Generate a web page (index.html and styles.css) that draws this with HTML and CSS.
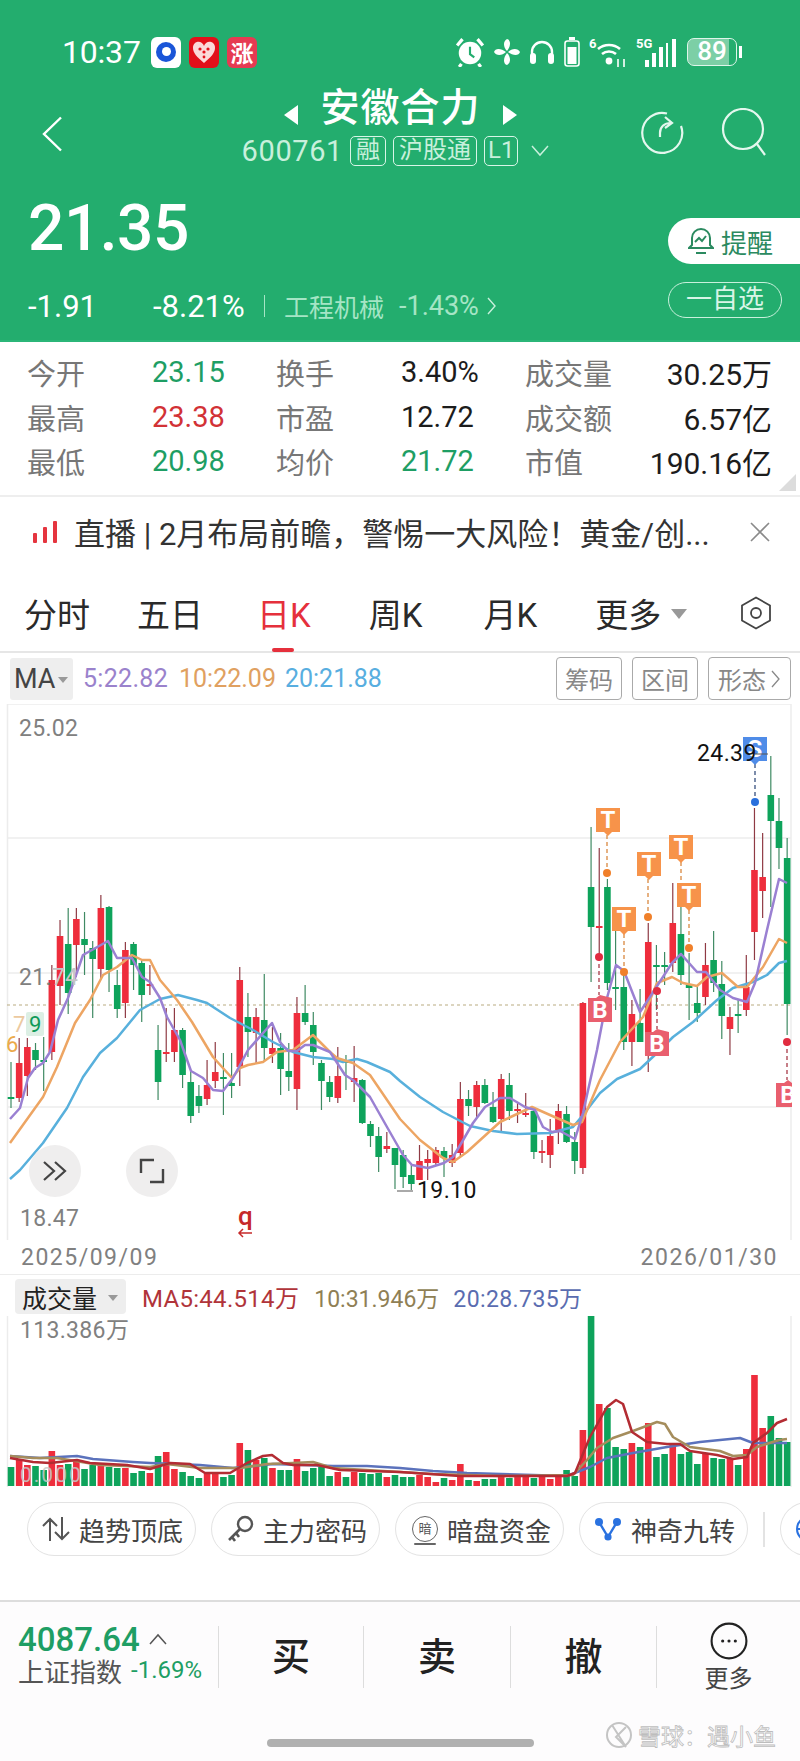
FILE: index.html
```html
<!DOCTYPE html>
<html lang="zh-CN">
<head>
  <meta charset="UTF-8">
  <title>安徽合力</title>
  <link rel="stylesheet" href="styles.css">
</head>
<body>
  <div id="page">
    <header id="top">
      <div class="status-bar">
        <div class="status-left">
          <span class="clock">10:37</span>
          <span class="app-icon app-blue"><svg width="22" height="22" viewBox="0 0 22 22"><circle cx="11" cy="11" r="10" fill="#1a55d8"/><circle cx="11.5" cy="10.5" r="4.5" fill="#fff"/></svg></span>
          <span class="app-icon app-red"><svg width="26" height="24" viewBox="0 0 26 24"><path d="M13 23C6 17 2 13 2 8a5.6 5.6 0 0 1 11-2 5.6 5.6 0 0 1 11 2c0 5-4 9-11 15z" fill="#fbd9d9"/><circle cx="9" cy="9" r="1.6" fill="#e2101a"/><circle cx="13" cy="12" r="1.6" fill="#e2101a"/><circle cx="17" cy="9" r="1.6" fill="#e2101a"/><circle cx="13" cy="17" r="1.4" fill="#e2101a"/></svg></span>
          <span class="app-icon app-pink">涨</span>
        </div>
        <div class="status-right">
          <svg width="30" height="30" viewBox="0 0 28 28"><circle cx="14" cy="15" r="10.5" fill="#fff"/><path d="M14 9v7l4 3" stroke="#23ad6e" stroke-width="2" fill="none"/><path d="M2 8l5-6M26 8l-5-6M6 25l-2 3M22 25l2 3" stroke="#fff" stroke-width="3"/></svg>
          <svg width="26" height="28" viewBox="0 0 26 28"><g fill="#fff"><path d="M13 13C9 9 9 3 13 1c4 1 4 7 0 12z"/><path d="M13 13C9 9 9 3 13 1c4 1 4 7 0 12z" transform="rotate(90 13 14)"/><path d="M13 13C9 9 9 3 13 1c4 1 4 7 0 12z" transform="rotate(180 13 14)"/><path d="M13 13C9 9 9 3 13 1c4 1 4 7 0 12z" transform="rotate(270 13 14)"/></g></svg>
          <svg width="26" height="28" viewBox="0 0 26 28"><path d="M3 23V14a10 10 0 0 1 20 0v9" stroke="#fff" stroke-width="2.4" fill="none"/><rect x="1" y="15" width="6" height="11" rx="3" fill="#fff"/><rect x="19" y="15" width="6" height="11" rx="3" fill="#fff"/></svg>
          <svg width="16" height="30" viewBox="0 0 16 30"><rect x="1" y="4" width="14" height="25" rx="2.5" stroke="#fff" stroke-width="1.6" fill="none"/><rect x="5" y="0" width="6" height="3" fill="#fff"/><rect x="3.5" y="10" width="9" height="17" fill="#fff"/></svg>
          <svg width="38" height="32" viewBox="0 0 38 32"><text x="0" y="12" class="status-mini">6</text><path d="M9 13a17 17 0 0 1 22 0M13 18a11 11 0 0 1 14 0" stroke="#fff" stroke-width="2.6" fill="none"/><circle cx="20" cy="25" r="3.4" fill="#fff"/><path d="M29 23v8M35 23v8" stroke="#fff" stroke-width="1.6"/></svg>
          <svg width="42" height="32" viewBox="0 0 42 32"><text x="0" y="12" class="status-mini">5G</text><g fill="#fff"><rect x="9" y="24" width="4" height="7"/><rect x="16" y="17" width="4" height="14"/><rect x="23" y="11" width="4" height="20"/><rect x="30" y="7" width="2" height="24"/><rect x="36" y="3" width="4" height="28"/></g></svg>
          <span class="battery"><span class="battery-level">89</span><i class="battery-tip"></i></span>
        </div>
      </div>

      <div class="nav-row">
        <svg class="back-icon" width="22" height="36" viewBox="0 0 22 36"><path d="M20 1.5L3 18l17 16.5" stroke="#fff" stroke-width="2.4" fill="none"/></svg>
        <div class="title-box">
          <div class="title-line">
            <i class="arrow-left"></i>
            <span class="stock-name">安徽合力</span>
            <i class="arrow-right"></i>
          </div>
          <div class="sub-line">
            <span class="stock-code">600761</span>
            <span class="tag">融</span>
            <span class="tag">沪股通</span>
            <span class="tag tag-num">L1</span>
            <svg width="18" height="12" viewBox="0 0 18 12"><path d="M1 1l8 9 8-9" stroke="#c8f0dc" stroke-width="1.5" fill="none"/></svg>
          </div>
        </div>
        <div class="nav-actions">
          <svg width="44" height="44" viewBox="0 0 44 44"><path d="M27 3.5A20 20 0 1 0 41 16" stroke="#e4f7ee" stroke-width="2.2" fill="none"/><path d="M20 27v-4c0-6 4-10 11-10M25 7l7 6-7 5" stroke="#e4f7ee" stroke-width="2.2" fill="none"/></svg>
          <svg width="48" height="48" viewBox="0 0 48 48"><circle cx="23" cy="21" r="20" stroke="#e4f7ee" stroke-width="2.2" fill="none"/><path d="M37 36l8 11" stroke="#e4f7ee" stroke-width="2.2"/></svg>
        </div>
      </div>

      <div class="price-row">
        <div class="price-left">
          <div class="last-price">21.35</div>
          <div class="change-line">
            <span class="chg-abs">-1.91</span>
            <span class="chg-pct">-8.21%</span>
            <i class="chg-sep"></i>
            <span class="sector">工程机械</span>
            <span class="sector-pct">-1.43%</span>
            <svg width="10" height="20" viewBox="0 0 10 20"><path d="M1 2l7 8-7 8" stroke="#c8f0dc" stroke-width="1.4" fill="none"/></svg>
          </div>
        </div>
        <div class="price-right">
          <div class="remind-btn">
            <svg width="26" height="28" viewBox="0 0 26 28"><path d="M13 2a9 9 0 0 1 9 9v7l3 3H1l3-3v-7a9 9 0 0 1 9-9z" stroke="#2b8a60" stroke-width="2" fill="none"/><path d="M8 26h10M7 15l4-4 3 3 4-5" stroke="#2b8a60" stroke-width="2" fill="none"/></svg>
            <span>提醒</span>
          </div>
          <div class="watch-btn">一自选</div>
        </div>
      </div>
    </header>

    <section class="stats">
      <div class="stat-row">
        <span class="stat-label">今开</span><span class="stat-val val-green">23.15</span>
        <span class="stat-label">换手</span><span class="stat-val">3.40%</span>
        <span class="stat-label">成交量</span><span class="stat-val val-end">30.25万</span>
      </div>
      <div class="stat-row">
        <span class="stat-label">最高</span><span class="stat-val val-red">23.38</span>
        <span class="stat-label">市盈</span><span class="stat-val">12.72</span>
        <span class="stat-label">成交额</span><span class="stat-val val-end">6.57亿</span>
      </div>
      <div class="stat-row">
        <span class="stat-label">最低</span><span class="stat-val val-green">20.98</span>
        <span class="stat-label">均价</span><span class="stat-val val-green">21.72</span>
        <span class="stat-label">市值</span><span class="stat-val val-end">190.16亿</span>
      </div>
      <i class="corner"></i>
    </section>

    <section class="news">
      <svg width="24" height="22" viewBox="0 0 24 22"><g fill="#e5353f"><rect x="0" y="12" width="4" height="10" rx="1"/><rect x="10" y="6" width="4" height="16" rx="1"/><rect x="20" y="0" width="4" height="22" rx="1"/></g></svg>
      <span class="news-text">直播 | 2月布局前瞻，警惕一大风险！黄金/创...</span>
      <svg width="20" height="20" viewBox="0 0 20 20"><path d="M1 1l18 18M19 1L1 19" stroke="#8a8a8a" stroke-width="1.6"/></svg>
    </section>

    <nav class="tabs">
      <span class="tab">分时</span>
      <span class="tab">五日</span>
      <span class="tab tab-on">日K</span>
      <span class="tab">周K</span>
      <span class="tab">月K</span>
      <span class="tab tab-more">更多<i class="tri"></i></span>
      <svg width="32" height="34" viewBox="0 0 32 34"><path d="M16 1.5l14 8v15l-14 8-14-8v-15z" stroke="#444" stroke-width="1.8" fill="none"/><circle cx="16" cy="17" r="5" stroke="#444" stroke-width="1.8" fill="none"/></svg>
    </nav>

    <div class="ma-row">
      <span class="ma-box">MA<i class="tri tri-small"></i></span>
      <span class="ma5">5:22.82</span>
      <span class="ma10">10:22.09</span>
      <span class="ma20">20:21.88</span>
      <div class="ma-btns">
        <span class="ma-btn">筹码</span>
        <span class="ma-btn">区间</span>
        <span class="ma-btn">形态<svg width="10" height="20" viewBox="0 0 10 20"><path d="M1 2l7 8-7 8" stroke="#888" stroke-width="1.3" fill="none"/></svg></span>
      </div>
    </div>

    <section class="chart-panel">
      <svg id="kline" width="800" height="536" viewBox="0 704 800 536"></svg>
      <button class="round-btn btn-expand"><svg width="26" height="22" viewBox="0 0 26 22"><path d="M2 2l10 9-10 9M13 2l10 9-10 9" stroke="#444" stroke-width="2.2" fill="none"/></svg></button>
      <button class="round-btn btn-full"><svg width="26" height="26" viewBox="0 0 26 26"><path d="M15 2H2v13M11 24h13V11" stroke="#444" stroke-width="2.4" fill="none"/></svg></button>
    </section>

    <div class="date-row">
      <span>2025/09/09</span>
      <span>2026/01/30</span>
    </div>

    <div class="vol-head">
      <span class="vol-box">成交量<i class="tri tri-small"></i></span>
      <span class="vol5">MA5:44.514万</span>
      <span class="vol10">10:31.946万</span>
      <span class="vol20">20:28.735万</span>
    </div>
    <section class="vol-panel">
      <svg id="volume" width="800" height="171" viewBox="0 1316 800 171"></svg>
    </section>

    <div class="chips">
      <span class="chip"><svg width="28" height="26" viewBox="0 0 28 26"><path d="M8 25V3M1 10l7-7 7 7M20 1v22M13 16l7 7 7-7" stroke="#555" stroke-width="2" fill="none"/></svg>趋势顶底</span>
      <span class="chip"><svg width="28" height="28" viewBox="0 0 28 28"><circle cx="19" cy="9" r="7" stroke="#555" stroke-width="2.4" fill="none"/><path d="M14 14L3 25M6 22l3 4M10 18l3 4" stroke="#555" stroke-width="2.6" fill="none"/></svg>主力密码</span>
      <span class="chip"><span class="ball">暗</span>暗盘资金</span>
      <span class="chip"><svg width="28" height="24" viewBox="0 0 28 24"><path d="M5 5l9 15 9-15" stroke="#2a72e0" stroke-width="2.4" fill="none"/><circle cx="5" cy="5" r="4" fill="#2a72e0"/><circle cx="23" cy="5" r="4" fill="#2a72e0"/><circle cx="14" cy="20" r="3.6" fill="#2a72e0"/></svg>神奇九转</span>
      <i class="chip-sep"></i>
      <span class="chip chip-cut"><svg width="28" height="28" viewBox="0 0 28 28"><circle cx="14" cy="14" r="12" stroke="#2a72e0" stroke-width="2" fill="none"/><path d="M2 14h24" stroke="#2a72e0" stroke-width="2"/></svg></span>
    </div>

    <footer class="bottom">
      <div class="trade-bar">
        <div class="index-box">
          <div class="index-top"><span class="index-val">4087.64</span><svg width="18" height="12" viewBox="0 0 18 12"><path d="M1 11l8-9 8 9" stroke="#555" stroke-width="1.5" fill="none"/></svg></div>
          <div class="index-sub"><span class="index-name">上证指数</span><span class="index-pct">-1.69%</span></div>
        </div>
        <span class="trade-btn">买</span>
        <span class="trade-btn">卖</span>
        <span class="trade-btn">撤</span>
        <div class="more-btn">
          <svg width="38" height="38" viewBox="0 0 36 36"><circle cx="18" cy="18" r="16.5" stroke="#222" stroke-width="2" fill="none"/><g fill="#222"><circle cx="12" cy="18" r="1.5"/><circle cx="18" cy="18" r="1.5"/><circle cx="24" cy="18" r="1.5"/></g></svg>
          <span>更多</span>
        </div>
      </div>
      <div class="home-line">
        <i class="home-bar"></i>
        <div class="watermark">
          <svg width="28" height="38" viewBox="0 0 28 38"><circle cx="14" cy="19" r="12" stroke="#c4c4c4" stroke-width="2" fill="none"/><path d="M7 9l14 22M21 11L11 21l10 10" stroke="#c4c4c4" stroke-width="2" fill="none"/></svg>
          <span>雪球：遇小鱼</span>
        </div>
      </div>
    </footer>
  </div>
  <script src="chart.js"></script>
</body>
</html>
```

FILE: styles.css
```css
html, body {
  margin: 0;
  padding: 0;
  background-color: #fff;
  font-family: Roboto, "Noto Sans CJK SC", sans-serif;
  color: #222;
}

#page {
  width: 800px;
  height: 1761px;
  overflow: hidden;
  display: flex;
  flex-direction: column;
}

i {
  display: block;
  font-style: normal;
}

/* header */
#top {
  height: 342px;
  box-sizing: border-box;
  background-color: #23ad6e;
  border-bottom: 2px solid #2bb678;
  color: #fff;
  flex: none;
}

.status-bar {
  height: 44px;
  margin-top: 30px;
  padding: 0 58px 0 62px;
  display: flex;
  justify-content: space-between;
  align-items: center;
}

.status-left {
  display: flex;
  align-items: center;
  gap: 8px;
}

.clock {
  font-size: 32px;
  width: 81px;
  letter-spacing: -0.2px;
  white-space: nowrap;
}

.app-icon {
  width: 30px;
  height: 31px;
  border-radius: 6px;
  display: flex;
  align-items: center;
  justify-content: center;
  font-size: 23px;
  font-weight: 700;
}

.app-blue { background-color: #fff; }
.app-red { background-color: #e2101a; }
.app-pink { background-color: #e63a52; }

.status-right {
  display: flex;
  align-items: center;
  gap: 9px;
}

.status-mini {
  font: 700 13px Roboto, sans-serif;
  fill: #fff;
}

.battery {
  display: flex;
  align-items: center;
  gap: 2px;
}

.battery-level {
  width: 50px;
  height: 28px;
  box-sizing: border-box;
  border: 1.5px solid #dff5ea;
  border-radius: 7px;
  font-size: 26px;
  font-weight: 500;
  line-height: 25px;
  text-align: center;
  background: linear-gradient(90deg, #7ccfa6 85%, transparent 85%);
}

.battery-tip {
  width: 3px;
  height: 12px;
  background-color: #fff;
}

.nav-row {
  height: 92px;
  margin-top: 6px;
  padding: 0 32px 0 41px;
  display: grid;
  grid-template-columns: 1fr auto 1fr;
  align-items: center;
}

.back-icon {
  margin-top: 16px;
}

.title-box {
  display: flex;
  flex-direction: column;
  align-items: center;
  padding: 0 8px 2px 0;
}

.title-line {
  display: flex;
  align-items: center;
  gap: 22px;
  height: 52px;
}

.stock-name {
  font-size: 39px;
  font-weight: 500;
  letter-spacing: 1px;
  line-height: 52px;
}

.arrow-left,
.arrow-right {
  width: 0;
  height: 0;
  margin-top: 14px;
  border-top: 10px solid transparent;
  border-bottom: 10px solid transparent;
}

.arrow-left { border-right: 14px solid #fff; }
.arrow-right { border-left: 14px solid #fff; }

.sub-line {
  display: flex;
  align-items: center;
  gap: 7px;
  padding-right: 10px;
  color: #c8f0dc;
}

.stock-code {
  font-size: 29px;
  letter-spacing: 0.6px;
}

.tag {
  height: 30px;
  box-sizing: border-box;
  padding: 0 5px;
  border: 1px solid #d8f5e7;
  border-radius: 5px;
  font-size: 24px;
  line-height: 26px;
}

.tag-num {
  padding: 0 3px;
  margin-right: 6px;
}

.nav-actions {
  display: flex;
  justify-content: flex-end;
  align-items: center;
  gap: 36px;
  padding-top: 12px;
}

.price-row {
  display: flex;
  justify-content: space-between;
  padding-top: 19px;
}

.price-left {
  padding-left: 28px;
}

.last-price {
  font-size: 64px;
  font-weight: 500;
  line-height: 75px;
  letter-spacing: -0.5px;
}

.change-line {
  display: flex;
  align-items: center;
  margin-top: 22px;
  height: 36px;
  font-size: 31px;
  color: #fff;
}

.chg-abs { width: 125px; }

.chg-pct { width: 111px; white-space: nowrap; }

.chg-sep {
  width: 1px;
  height: 22px;
  background-color: #a5e5c5;
  margin-right: 19px;
}

.sector {
  font-size: 25px;
  color: #a5e5c5;
  margin-right: 15px;
}

.sector-pct {
  font-size: 27px;
  color: #a5e5c5;
  margin-right: 8px;
}

.price-right {
  width: 132px;
  padding-top: 27px;
}

.remind-btn {
  height: 46px;
  display: flex;
  align-items: center;
  gap: 7px;
  padding-left: 20px;
  background-color: #fff;
  border-radius: 23px 0 0 23px;
  color: #2b8a60;
  font-size: 26px;
}

.watch-btn {
  width: 114px;
  height: 36px;
  margin-top: 18px;
  box-sizing: border-box;
  border: 1px solid #c8f0dc;
  border-radius: 18px;
  color: #d8f5e7;
  font-size: 26px;
  line-height: 32px;
  text-align: center;
}

/* quote table */
.stats {
  position: relative;
  height: 155px;
  box-sizing: border-box;
  padding-top: 8px;
  border-bottom: 2px solid #eee;
  flex: none;
}

.stat-row {
  height: 44.5px;
  padding: 0 28px 0 27px;
  display: grid;
  grid-template-columns: 125px 124px 125px 124px 1fr 0;
  align-items: center;
}

.stat-row .val-end {
  grid-column: 6;
  justify-self: end;
  white-space: nowrap;
}

.stat-label {
  font-size: 29px;
  color: #777;
}

.stat-val {
  font-size: 29px;
  color: #1c1c1c;
}

.val-end { font-size: 30px; }
.val-green { color: #1e9e64; }
.val-red { color: #d23236; }

.corner {
  position: absolute;
  right: 4px;
  bottom: 4px;
  width: 0;
  height: 0;
  border-left: 17px solid transparent;
  border-bottom: 17px solid #dcdcdc;
}

/* news strip */
.news {
  height: 74px;
  box-sizing: border-box;
  padding: 0 30px 5px 33px;
  display: flex;
  align-items: center;
  flex: none;
}

.news-text {
  flex: 1;
  margin-left: 17px;
  font-size: 31px;
  color: #333;
  white-space: nowrap;
  overflow: hidden;
}

/* tabs */
.tabs {
  position: relative;
  height: 82px;
  box-sizing: border-box;
  padding: 3px 27px 0 24px;
  display: flex;
  align-items: center;
  border-bottom: 2px solid #e6e6e6;
  flex: none;
}

.tab {
  font-size: 33px;
  color: #2a2a2a;
  white-space: nowrap;
}

.tab:nth-child(1) { margin-right: 47px; }
.tab:nth-child(2) { margin-right: 54px; }
.tab:nth-child(3) { margin-right: 58px; }
.tab:nth-child(4) { margin-right: 61px; }
.tab:nth-child(5) { margin-right: 58px; }

.tab-on {
  color: #e5303c;
}

.tab-on::after {
  content: "";
  position: absolute;
  left: 272px;
  bottom: -1px;
  width: 22px;
  height: 4px;
  border-radius: 2px;
  background-color: #e5303c;
}

.tab-more {
  display: flex;
  align-items: center;
  margin-right: 53px;
}

.tri {
  width: 0;
  height: 0;
  margin-left: 10px;
  margin-top: 2px;
  border-left: 8px solid transparent;
  border-right: 8px solid transparent;
  border-top: 10px solid #999;
}

.tri-small {
  margin-left: 3px;
  border-left-width: 5px;
  border-right-width: 5px;
  border-top-width: 6px;
}

.ma-row {
  height: 51px;
  box-sizing: border-box;
  padding: 3px 9px 3px 10px;
  display: flex;
  align-items: center;
  font-size: 25px;
  flex: none;
}

.ma-box {
  width: 63px;
  height: 42px;
  box-sizing: border-box;
  padding-left: 4px;
  display: flex;
  align-items: center;
  background-color: #eee;
  border-radius: 3px;
  font-size: 27px;
  color: #444;
  margin-right: 10px;
}

.ma5 { color: #9a82cc; margin-right: 11px; letter-spacing: 0.3px; }
.ma10 { color: #e0a060; margin-right: 9px; }
.ma20 { color: #58aee0; }

.ma-btns {
  margin-left: auto;
  display: flex;
  gap: 10px;
}

.ma-btn {
  height: 43px;
  box-sizing: border-box;
  padding: 0 8px;
  display: flex;
  align-items: center;
  gap: 5px;
  border: 1px solid #aaa;
  border-radius: 4px;
  color: #888;
  font-size: 24px;
}

.ma-btn:last-child {
  padding: 0 9px;
}

/* charts */
.chart-panel {
  position: relative;
  height: 536px;
  flex: none;
}

.chart-panel svg,
.vol-panel svg {
  display: block;
}

.round-btn {
  position: absolute;
  top: 441px;
  width: 52px;
  height: 52px;
  padding: 0;
  border: none;
  border-radius: 50%;
  background-color: #efeeee;
  display: flex;
  align-items: center;
  justify-content: center;
}

.btn-expand { left: 29px; }
.btn-full { left: 126px; }

.frame-line { stroke: #ececec; stroke-width: 1.5; }
.price-ref { stroke: #b9ab80; stroke-width: 1; stroke-dasharray: 3 3; }
.axis-text { font: 23px Roboto, sans-serif; fill: #808080; letter-spacing: 0.3px; }
.axis-pale { fill: #c6c6c6; }
.extreme-text { font: 23px Roboto, sans-serif; fill: #111; letter-spacing: 0.4px; }
.nine-bg { fill: #dcefe4; }
.nine-text { font: 22px Roboto, sans-serif; fill: #109a58; }
.seven-text { font: 22px Roboto, sans-serif; fill: #ecc9a0; }
.six-text { font: 22px Roboto, sans-serif; fill: #eba94a; }
.q-text { font: 500 26px Roboto, sans-serif; fill: #c62a2a; }
.q-arrow { stroke: #c62a2a; stroke-width: 1.5; fill: none; }

.wick-up { stroke: #8f3a44; stroke-width: 1.2; }
.wick-down { stroke: #3f8a63; stroke-width: 1.2; }
.bar-up { fill: #ee2d3c; }
.bar-down { fill: #0ea35b; }

.ma-line { fill: none; stroke-width: 2.5; stroke-linejoin: round; }
.line5 { stroke: #9a80d2; }
.line10 { stroke: #eda563; }
.line20 { stroke: #58b0dc; }
.vline5 { stroke: #b32c33; }
.vline10 { stroke: #a58d5c; }
.vline20 { stroke: #5b72bc; }

.flag-t { fill: #f7934a; }
.flag-s { fill: #4f8ce8; }
.flag-b { fill: #e95f6e; }
.flag-letter { font: 700 24px Roboto, sans-serif; fill: #fff; text-anchor: middle; }
.dash-t { stroke: #d9883f; stroke-width: 1.3; stroke-dasharray: 4 3; }
.dash-s { stroke: #38507e; stroke-width: 1.3; stroke-dasharray: 4 3; }
.dash-b { stroke: #a83a48; stroke-width: 1.3; stroke-dasharray: 4 3; }
.dot-t { fill: #f0802a; }
.dot-s { fill: #2a6fdc; }
.dot-b { fill: #e12c40; }
.high-tick { stroke: #555; stroke-width: 1; }

.date-row {
  height: 35px;
  box-sizing: border-box;
  padding: 0 22px 0 21px;
  display: flex;
  justify-content: space-between;
  align-items: center;
  border-bottom: 1.5px solid #ececec;
  font-size: 23px;
  letter-spacing: 1.5px;
  color: #808080;
  flex: none;
}

.vol-head {
  height: 41px;
  padding: 2px 0 0 15px;
  box-sizing: border-box;
  display: flex;
  align-items: center;
  font-size: 24px;
  letter-spacing: 0.3px;
  flex: none;
}

.vol-box {
  width: 111px;
  height: 35px;
  box-sizing: border-box;
  padding-left: 7px;
  display: flex;
  align-items: center;
  background-color: #eee;
  border-radius: 4px;
  font-size: 25px;
  letter-spacing: 0;
  color: #222;
  margin-right: 16px;
}

.vol-box .tri-small { margin-left: 11px; }
.vol5 { color: #b0343a; margin-right: 15px; }
.vol10 { color: #8f7f55; margin-right: 14px; font-size: 23px; letter-spacing: 0; }
.vol20 { color: #5a6cb0; font-size: 23px; letter-spacing: 0.4px; }

.vol-panel {
  height: 171px;
  flex: none;
}

.zero-text {
  font: 21px Roboto, sans-serif;
  fill: #c8c8c8;
  letter-spacing: 2px;
  opacity: 0.85;
}

/* indicator chips */
.chips {
  margin-top: 15px;
  padding-left: 27px;
  height: 54px;
  display: flex;
  align-items: center;
  gap: 15px;
  flex: none;
}

.chip {
  width: 169px;
  height: 54px;
  flex: none;
  box-sizing: border-box;
  padding-left: 14px;
  border: 1px solid #e3e3e3;
  border-radius: 27px;
  display: flex;
  align-items: center;
  gap: 9px;
  font-size: 26px;
  color: #444;
  white-space: nowrap;
}

.chip-sep {
  width: 2px;
  height: 35px;
  flex: none;
  background-color: #e3e3e3;
}

.chip-cut {
  border-right: none;
}

.ball {
  position: relative;
  width: 24px;
  height: 24px;
  flex: none;
  margin-left: 2px;
  border: 1.5px solid #666;
  border-radius: 50%;
  font-size: 13px;
  line-height: 24px;
  text-align: center;
  color: #555;
}

.ball::after {
  content: "";
  position: absolute;
  left: 1px;
  bottom: -4px;
  width: 22px;
  height: 2px;
  border-radius: 1px;
  background-color: #666;
}

/* bottom bar */
.bottom {
  margin-top: 44px;
  flex: 1;
  border-top: 2px solid #ddd;
  background-color: #fdfcfd;
}

.trade-bar {
  height: 85px;
  padding-top: 24px;
  display: grid;
  grid-template-columns: 218px 145px 147px 146px 1fr;
}

.index-box {
  padding-left: 18px;
  margin-top: -4px;
}

.index-top {
  display: flex;
  align-items: center;
  gap: 9px;
  height: 34px;
}

.index-val {
  font-size: 33px;
  font-weight: 500;
  color: #1e9e64;
}

.index-sub {
  display: flex;
  align-items: center;
  gap: 9px;
  height: 28px;
}

.index-name {
  font-size: 26px;
  color: #555;
  white-space: nowrap;
}

.index-pct {
  font-size: 24px;
  color: #1e9e64;
}

.trade-btn,
.more-btn {
  height: 62px;
  border-left: 1px solid #ddd;
  text-align: center;
}

.trade-btn {
  font-size: 38px;
  font-weight: 500;
  line-height: 62px;
  color: #222;
}

.more-btn {
  display: flex;
  flex-direction: column;
  align-items: center;
  gap: 6px;
  font-size: 24px;
  line-height: 26px;
  color: #444;
}

.more-btn svg {
  margin-top: -4px;
  flex: none;
}

.home-line {
  position: relative;
  height: 60px;
  display: flex;
  justify-content: center;
  padding-top: 28px;
  box-sizing: border-box;
}

.home-bar {
  width: 267px;
  height: 8px;
  border-radius: 4px;
  background-color: #b0b0b0;
}

.watermark {
  position: absolute;
  right: 24px;
  top: 5px;
  display: flex;
  align-items: center;
  gap: 5px;
  font-size: 23px;
  color: #fff;
  -webkit-text-stroke: 0.8px #bdbdbd;
}
```

FILE: chart.js
```js
// top of body, bottom of body, wick top, wick bottom, u = red / d = green
const candles = [
  [1097,1099,1062,1108,"d"],[1063,1098,1038,1102,"u"],[1047,1076,1038,1096,"u"],[1050,1060,1043,1070,"d"],
  [1060,1062,1037,1091,"d"],[980,1052,965,1060,"u"],[936,986,920,1005,"u"],[944,993,908,1014,"d"],
  [919,945,908,977,"u"],[939,945,912,975,"d"],[948,959,941,1018,"d"],[908,969,895,978,"u"],
  [907,970,906,992,"d"],[985,1009,970,1018,"d"],[950,1003,942,1018,"u"],[944,965,942,990,"d"],
  [963,995,960,1022,"d"],[984,986,965,995,"u"],[1050,1082,1025,1100,"d"],[1052,1054,1008,1062,"u"],
  [1030,1052,1008,1062,"u"],[1030,1075,1028,1088,"d"],[1082,1116,1072,1123,"d"],[1096,1106,1085,1113,"d"],
  [1085,1099,1060,1105,"u"],[1072,1081,1042,1088,"u"],[1077,1079,1053,1115,"d"],[1083,1086,1053,1098,"d"],
  [980,1067,967,1086,"u"],[1017,1032,993,1057,"d"],[1017,1033,1008,1063,"u"],[1020,1048,974,1062,"d"],
  [1048,1054,1027,1063,"u"],[1048,1069,1033,1095,"d"],[1071,1077,1043,1091,"d"],[1013,1089,997,1110,"u"],
  [1013,1022,985,1025,"d"],[1025,1052,1012,1065,"d"],[1063,1081,1060,1110,"d"],[1082,1097,1076,1102,"d"],
  [1076,1098,1047,1103,"u"],[1061,1063,1055,1090,"d"],[1078,1082,1046,1102,"u"],[1080,1123,1079,1124,"d"],
  [1124,1136,1121,1147,"d"],[1136,1157,1127,1172,"d"],[1146,1149,1132,1153,"u"],[1148,1165,1148,1189,"d"],
  [1155,1177,1150,1188,"d"],[1175,1184,1165,1190,"d"],[1161,1180,1145,1180,"u"],[1159,1163,1150,1180,"u"],
  [1150,1163,1147,1165,"u"],[1151,1158,1147,1177,"d"],[1155,1163,1144,1167,"u"],[1099,1153,1082,1157,"u"],
  [1099,1106,1090,1116,"d"],[1085,1107,1081,1117,"u"],[1085,1103,1079,1104,"d"],[1107,1122,1092,1123,"d"],
  [1079,1119,1074,1133,"u"],[1085,1111,1073,1120,"d"],[1109,1111,1102,1123,"u"],[1113,1115,1093,1117,"u"],
  [1111,1152,1110,1159,"d"],[1151,1153,1140,1163,"u"],[1136,1155,1119,1168,"u"],[1111,1130,1104,1144,"u"],
  [1114,1142,1106,1143,"d"],[1142,1161,1132,1174,"d"],[1003,1168,1002,1174,"u"],[887,927,827,982,"d"],
  [926,928,848,958,"u"],[887,983,879,990,"d"],[987,989,915,1010,"d"],[987,1042,972,1050,"d"],
  [1014,1042,1000,1066,"u"],[1023,1042,989,1042,"d"],[942,1055,923,1072,"u"],[965,967,945,1010,"d"],
  [965,967,952,985,"d"],[923,963,883,972,"u"],[934,975,900,985,"d"],[985,988,953,1020,"d"],
  [1003,1013,985,1022,"d"],[965,997,943,1005,"u"],[960,983,931,992,"d"],[984,1016,961,1039,"d"],
  [1017,1029,1007,1055,"u"],[1014,1016,1000,1033,"d"],[987,1010,955,1016,"u"],[870,932,808,960,"u"],
  [877,891,833,918,"u"],[795,821,756,907,"d"],[821,848,798,869,"d"],[858,1004,838,1035,"d"]
];

// top of each volume bar, same order
const volTops = [
  1467,1460,1465,1466,1470,1451,1465,1464,1460,1469,1465,1463,1467,1468,1468,1473,
  1471,1473,1456,1452,1469,1472,1476,1478,1473,1472,1477,1475,1443,1450,1460,1458,
  1468,1470,1470,1459,1471,1468,1467,1476,1472,1477,1472,1473,1474,1473,1477,1475,
  1477,1477,1475,1477,1482,1478,1480,1464,1480,1481,1479,1479,1477,1478,1476,1476,
  1478,1477,1479,1477,1470,1476,1430,1316,1404,1408,1447,1449,1443,1447,1423,1457,
  1454,1443,1454,1452,1464,1453,1458,1459,1458,1465,1449,1375,1428,1416,1438,1442
];

const price = {
  ma5: [[10,1119],[20,1108],[28,1078],[35,1068],[43,1063],[50,1052],[58,1020],[68,998],[75,978],[83,955],[108,941],[117,958],[132,958],[142,977],[150,982],[160,998],[167,1017],[180,1040],[191,1071],[203,1078],[213,1090],[223,1091],[233,1078],[240,1065],[248,1050],[272,1023],[280,1042],[288,1051],[297,1051],[305,1045],[313,1045],[330,1052],[345,1075],[353,1080],[370,1097],[387,1127],[403,1155],[412,1165],[428,1168],[444,1163],[453,1157],[462,1142],[473,1123],[485,1107],[500,1098],[510,1098],[525,1107],[535,1110],[543,1127],[552,1132],[560,1131],[575,1139],[583,1113],[597,1050],[607,998],[616,965],[624,971],[640,1012],[648,1000],[672,963],[681,954],[697,972],[706,972],[720,990],[733,998],[747,1002],[755,983],[767,930],[779,879],[787,883]],
  ma10: [[10,1143],[43,1097],[57,1067],[75,1023],[90,1000],[103,975],[117,967],[132,955],[142,960],[150,960],[160,980],[177,1000],[192,1022],[213,1057],[232,1078],[240,1068],[248,1065],[263,1062],[277,1052],[293,1050],[313,1035],[330,1052],[337,1058],[353,1063],[370,1075],[400,1119],[420,1140],[443,1158],[453,1162],[467,1152],[500,1122],[532,1107],[550,1115],[573,1125],[582,1122],[600,1080],[620,1042],[643,1017],[657,983],[672,977],[683,983],[697,986],[707,977],[722,973],[738,987],[747,987],[763,967],[779,939],[787,943]],
  ma20: [[10,1179],[20,1170],[43,1143],[67,1108],[83,1077],[100,1053],[117,1038],[140,1010],[160,999],[178,995],[197,1000],[207,1003],[230,1018],[253,1030],[273,1042],[293,1052],[313,1057],[333,1059],[343,1062],[357,1059],[367,1062],[390,1072],[400,1081],[420,1097],[443,1112],[470,1126],[493,1131],[517,1134],[550,1133],[573,1127],[583,1115],[600,1093],[617,1079],[640,1069],[657,1053],[673,1037],[693,1022],[717,1000],[733,988],[753,982],[767,975],[779,963],[787,961]]
};

const vol = {
  ma20: [[10,1456],[40,1458],[77,1456],[93,1459],[133,1462],[150,1463],[200,1465],[233,1468],[273,1464],[333,1466],[367,1466],[400,1468],[433,1471],[467,1473],[567,1476],[590,1467],[607,1458],[633,1453],[667,1447],[700,1442],[740,1438],[753,1443],[787,1443]],
  ma10: [[10,1456],[33,1458],[57,1458],[100,1465],[150,1467],[167,1464],[200,1468],[240,1468],[267,1464],[293,1463],[313,1462],[333,1468],[400,1472],[433,1474],[500,1476],[573,1475],[587,1460],[597,1448],[613,1438],[633,1431],[657,1422],[665,1424],[673,1437],[690,1447],[720,1451],[733,1456],[747,1455],[757,1447],[779,1440],[787,1439]],
  ma5: [[10,1458],[33,1462],[50,1463],[77,1460],[90,1463],[127,1465],[150,1469],[170,1463],[190,1464],[205,1473],[230,1473],[247,1463],[263,1456],[272,1455],[283,1463],[293,1465],[317,1465],[340,1470],[400,1472],[460,1476],[567,1476],[575,1473],[590,1437],[607,1407],[616,1400],[623,1404],[632,1432],[647,1442],[667,1444],[680,1444],[690,1451],[717,1455],[733,1459],[747,1457],[753,1443],[767,1433],[777,1423],[787,1419]]
};

// flag box left/top, then the dot it hangs from. B flags sit below their dot.
const flags = [
  { kind: "t", letter: "T", x: 596, y: 808, dotX: 607, dotY: 873 },
  { kind: "t", letter: "T", x: 612, y: 907, dotX: 624, dotY: 972 },
  { kind: "t", letter: "T", x: 637, y: 852, dotX: 648, dotY: 917 },
  { kind: "t", letter: "T", x: 669, y: 835, dotX: 681, dotY: 899 },
  { kind: "t", letter: "T", x: 677, y: 883, dotX: 689, dotY: 948 },
  { kind: "s", letter: "S", x: 743, y: 737, dotX: 755, dotY: 802 },
  { kind: "b", letter: "B", x: 588, y: 998, dotX: 599, dotY: 957 },
  { kind: "b", letter: "B", x: 645, y: 1032, dotX: 657, dotY: 991 },
  { kind: "b", letter: "B", x: 776, y: 1083, dotX: 787, dotY: 1042 }
];

const STEP = 8.17;
const BAR_W = 6.6;

function candleX(i) {
  return 11 + STEP * i;
}

function polyline(points, cls) {
  return `<polyline class="ma-line ${cls}" points="${points.map(p => p.join(",")).join(" ")}"/>`;
}

function drawFlag(f) {
  const w = 24;
  const h = 24;
  const cx = f.x + w / 2;
  let out = "";
  if (f.kind === "b") {
    const right = Math.min(f.x + w, 792);
    out += `<line class="dash-b" x1="${f.dotX}" y1="${f.dotY}" x2="${f.dotX}" y2="${f.y - 3}"/>`;
    out += `<polygon class="flag-b" points="${f.x},${f.y} ${cx - 4},${f.y} ${cx},${f.y - 3} ${right},${f.y} ${right},${f.y + h} ${f.x},${f.y + h}"/>`;
  } else {
    out += `<line class="dash-${f.kind}" x1="${f.dotX}" y1="${f.y + h + 3}" x2="${f.dotX}" y2="${f.dotY}"/>`;
    out += `<polygon class="flag-${f.kind}" points="${f.x},${f.y} ${f.x + w},${f.y} ${f.x + w},${f.y + h} ${cx + 4},${f.y + h} ${cx},${f.y + h + 4} ${cx - 4},${f.y + h} ${f.x},${f.y + h}"/>`;
  }
  out += `<text class="flag-letter" x="${cx}" y="${f.y + 20}">${f.letter}</text>`;
  out += `<circle class="dot-${f.kind}" cx="${f.dotX}" cy="${f.dotY}" r="4"/>`;
  return out;
}

function drawKline() {
  let s = "";
  [704, 838, 973, 1107].forEach(y => {
    s += `<line class="frame-line" x1="7" x2="791" y1="${y}" y2="${y}"/>`;
  });
  s += `<line class="frame-line" x1="7.5" x2="7.5" y1="704" y2="1240"/>`;
  s += `<line class="frame-line" x1="791" x2="791" y1="704" y2="1240"/>`;
  s += `<line class="price-ref" x1="7" x2="791" y1="1005" y2="1005"/>`;
  s += `<text class="axis-text" x="19" y="736">25.02</text>`;
  s += `<text class="axis-text" x="20" y="1226">18.47</text>`;

  candles.forEach((c, i) => {
    const x = candleX(i);
    s += `<line class="${c[4] === "u" ? "wick-up" : "wick-down"}" x1="${x}" x2="${x}" y1="${c[2]}" y2="${c[3]}"/>`;
    s += `<rect class="${c[4] === "u" ? "bar-up" : "bar-down"}" x="${x - BAR_W / 2}" y="${c[0]}" width="${BAR_W}" height="${c[1] - c[0]}"/>`;
  });

  s += polyline(price.ma20, "line20");
  s += polyline(price.ma10, "line10");
  s += polyline(price.ma5, "line5");
  flags.forEach(f => { s += drawFlag(f); });

  s += `<text class="axis-text" x="19" y="985">21.<tspan class="axis-pale">74</tspan></text>`;
  s += `<rect class="nine-bg" x="26" y="1012" width="18" height="24" rx="2"/>`;
  s += `<text class="seven-text" x="13" y="1032">7</text>`;
  s += `<text class="nine-text" x="29" y="1032">9</text>`;
  s += `<text class="six-text" x="6" y="1052">6</text>`;
  s += `<text class="extreme-text" x="697" y="761">24.39</text>`;
  s += `<line class="high-tick" x1="755" x2="768" y1="754" y2="754"/>`;
  s += `<text class="extreme-text" x="417" y="1198">19.10</text>`;
  s += `<line class="high-tick" x1="397" x2="413" y1="1191" y2="1191"/>`;
  s += `<text class="q-text" x="238" y="1225">q</text>`;
  s += `<path class="q-arrow" d="M252 1233h-13m4-4l-4 4 4 4"/>`;
  document.getElementById("kline").innerHTML = s;
}

function drawVolume() {
  let s = "";
  s += `<line class="frame-line" x1="7.5" x2="7.5" y1="1316" y2="1487"/>`;
  s += `<line class="frame-line" x1="791" x2="791" y1="1316" y2="1487"/>`;
  s += `<text class="axis-text" x="20" y="1338">113.386万</text>`;
  volTops.forEach((top, i) => {
    s += `<rect class="${candles[i][4] === "u" ? "bar-up" : "bar-down"}" x="${candleX(i) - BAR_W / 2}" y="${top}" width="${BAR_W}" height="${1486 - top}"/>`;
  });
  s += polyline(vol.ma20, "vline20");
  s += polyline(vol.ma10, "vline10");
  s += polyline(vol.ma5, "vline5");
  s += `<text class="zero-text" x="20" y="1482">0.000</text>`;
  document.getElementById("volume").innerHTML = s;
}

drawKline();
drawVolume();
```
